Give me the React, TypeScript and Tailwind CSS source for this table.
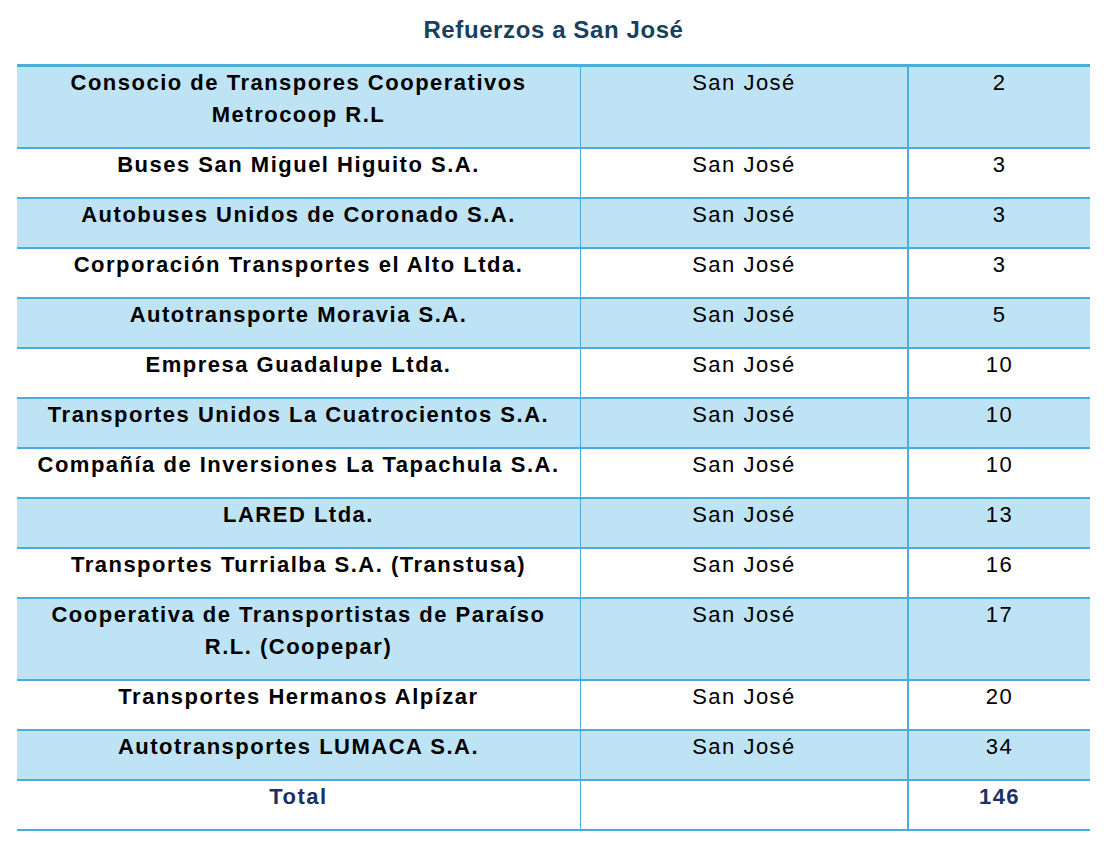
import React from 'react';

/**
 * Refuerzos table: empresa, zona, cantidad de unidades
 */
interface Fila {
  empresa: string[];
  zona: string;
  cantidad: number;
}

const filas: Fila[] = [
  { empresa: ['Consocio de Transpores Cooperativos', 'Metrocoop R.L'], zona: 'San José', cantidad: 2 },
  { empresa: ['Buses San Miguel Higuito S.A.'], zona: 'San José', cantidad: 3 },
  { empresa: ['Autobuses Unidos de Coronado S.A.'], zona: 'San José', cantidad: 3 },
  { empresa: ['Corporación Transportes el Alto Ltda.'], zona: 'San José', cantidad: 3 },
  { empresa: ['Autotransporte Moravia S.A.'], zona: 'San José', cantidad: 5 },
  { empresa: ['Empresa Guadalupe Ltda.'], zona: 'San José', cantidad: 10 },
  { empresa: ['Transportes Unidos La Cuatrocientos S.A.'], zona: 'San José', cantidad: 10 },
  { empresa: ['Compañía de Inversiones La Tapachula S.A.'], zona: 'San José', cantidad: 10 },
  { empresa: ['LARED Ltda.'], zona: 'San José', cantidad: 13 },
  { empresa: ['Transportes Turrialba S.A. (Transtusa)'], zona: 'San José', cantidad: 16 },
  { empresa: ['Cooperativa de Transportistas de Paraíso', 'R.L. (Coopepar)'], zona: 'San José', cantidad: 17 },
  { empresa: ['Transportes Hermanos Alpízar'], zona: 'San José', cantidad: 20 },
  { empresa: ['Autotransportes LUMACA S.A.'], zona: 'San José', cantidad: 34 },
];

const cell = 'pt-0 pb-[16px] px-2 text-center leading-[32px]';

export default function App(): React.ReactElement {
  return (
    <div className="min-h-[849px] w-[1107px] bg-white text-black font-['Liberation_Sans',Arial,sans-serif]">
      {/* Title */}
      <div className="h-[64px] pt-[14px] text-center text-[24px] leading-[31px] font-bold tracking-[0.6px] text-[#17415e]">
        Refuerzos a San José
      </div>

      {/* Table */}
      <div className="ml-[17px] w-[1073px] border-t-[3px] border-[#4badde] text-[22px] tracking-[1.5px]">
        {filas.map((fila, index) => (
          <div
            key={fila.empresa.join(' ')}
            className={`grid grid-cols-[563px_327px_183px] border-b-2 border-[#4badde] ${
              index % 2 === 0 ? 'bg-[#bee3f4]' : 'bg-white'
            }`}
          >
            <div className={`${cell} font-bold`}>
              {fila.empresa.map((line) => (
                <div key={line}>{line}</div>
              ))}
            </div>
            <div className={`${cell} border-l border-[#4badde]`}>{fila.zona}</div>
            <div className={`${cell} border-l-2 border-[#4badde]`}>{fila.cantidad}</div>
          </div>
        ))}

        {/* Total */}
        <div className="grid grid-cols-[563px_327px_183px] border-b-2 border-[#4badde] bg-white font-bold text-[#1c3063]">
          <div className={cell}>Total</div>
          <div className={`${cell} border-l border-[#4badde]`}></div>
          <div className={`${cell} border-l-2 border-[#4badde]`}>146</div>
        </div>
      </div>
    </div>
  );
}
